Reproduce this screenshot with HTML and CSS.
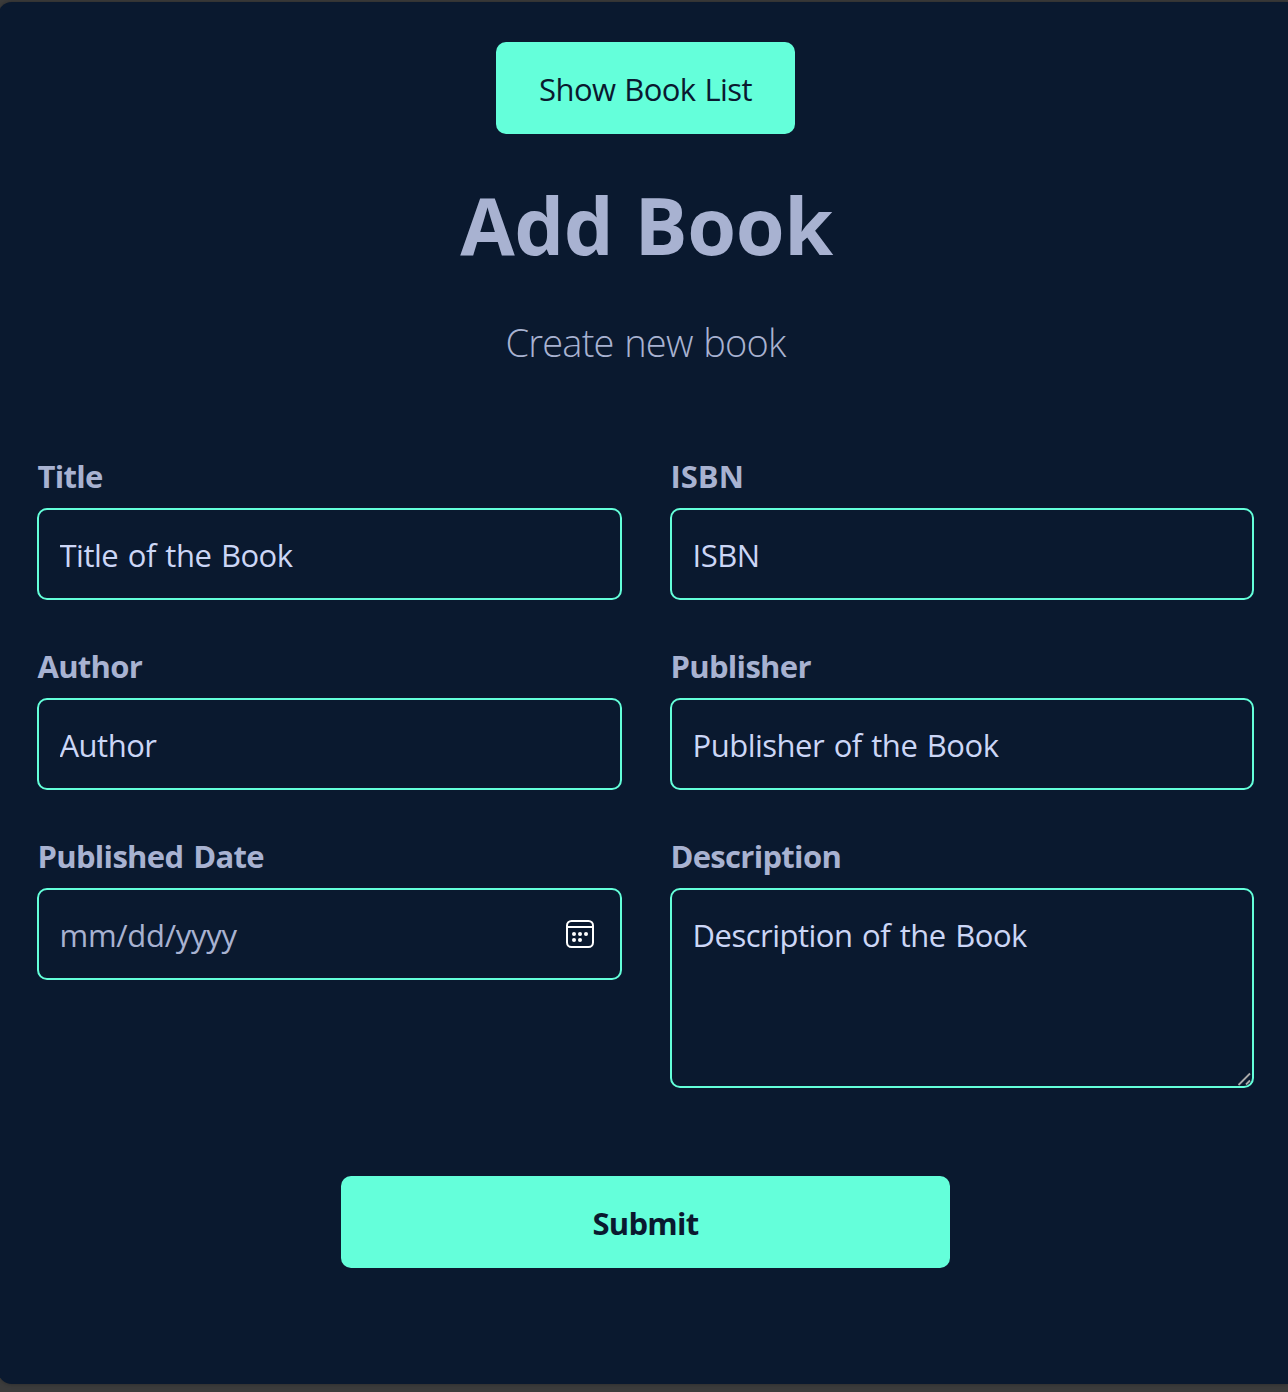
FILE: index.html
```
<!DOCTYPE html>
<html lang="en">
<head>
<meta charset="utf-8">
<title>Add Book</title>
<link rel="stylesheet" href="styles.css">
</head>
<body>
<main class="card">
  <button class="btn btn-list" type="button">Show Book List</button>
  <h1 class="heading">Add Book</h1>
  <p class="lead">Create new book</p>
  <form class="form">
    <div class="fields">
      <div class="field">
        <label class="label" for="title">Title</label>
        <input class="input" id="title" type="text" placeholder="Title of the Book">
      </div>
      <div class="field">
        <label class="label label-short" for="isbn">ISBN</label>
        <input class="input" id="isbn" type="text" placeholder="ISBN">
      </div>
      <div class="field">
        <label class="label" for="author">Author</label>
        <input class="input" id="author" type="text" placeholder="Author">
      </div>
      <div class="field">
        <label class="label" for="publisher">Publisher</label>
        <input class="input" id="publisher" type="text" placeholder="Publisher of the Book">
      </div>
      <div class="field">
        <label class="label" for="date">Published Date</label>
        <div class="input date">
          <input class="date-text" id="date" type="text" placeholder="mm/dd/yyyy">
          <svg class="calendar" width="28" height="28" viewBox="0 0 28 28" fill="none" stroke="#fff" stroke-width="2">
            <rect x="1" y="1" width="26" height="26" rx="4.5"/>
            <path d="M1 7h26"/>
            <g fill="#fff" stroke="none">
              <circle cx="8" cy="14" r="2"/><circle cx="14" cy="14" r="2"/><circle cx="20" cy="14" r="2"/>
              <circle cx="8" cy="20" r="2"/><circle cx="14" cy="20" r="2"/>
            </g>
          </svg>
        </div>
      </div>
      <div class="field">
        <label class="label" for="description">Description</label>
        <div class="area-wrap">
          <textarea class="input area" id="description" placeholder="Description of the Book"></textarea>
          <svg class="grip" width="14" height="14" viewBox="0 0 14 14" stroke="#a9a9a9" stroke-width="1.8">
            <path d="M1.500 13L13 1.500M9 12.500L13 8.500"/>
          </svg>
        </div>
      </div>
    </div>
    <button class="btn btn-submit" type="submit">Submit</button>
  </form>
</main>
</body>
</html>
```
FILE: styles.css
```
* { box-sizing: border-box; }
body {
  margin: 0;
  padding-top: 2px;
  height: 1392px;
  overflow: hidden;
  background: #3c3c3c;
  font-family: "Open Sans", sans-serif;
  font-size: 31px;
  color: #a8b2d1;
}
.card {
  display: flex;
  flex-direction: column;
  align-items: center;
  height: 1382px;
  margin-left: -2px;
  padding: 40px 34px 0 39px;
  background: #0a192f;
  border-radius: 14px 0 0 14px;
  box-shadow: 0 0 4px rgba(0, 0, 0, 0.3);
}
.btn {
  height: 92px;
  padding: 2px 0 0;
  border: 0;
  border-radius: 10px;
  background: #64ffda;
  color: #0a192f;
  font-family: inherit;
  font-size: 31px;
}
.btn-list {
  width: 299px;
  letter-spacing: -0.6px;
  word-spacing: 1.5px;
}
.heading {
  margin: 37px 0 0;
  padding-left: 2px;
  font-size: 79px;
  line-height: 108px;
  font-weight: 700;
  letter-spacing: -0.4px;
  word-spacing: 1px;
}
.lead {
  margin: 36px 0 0;
  font-size: 38px;
  line-height: 54px;
  font-weight: 300;
  letter-spacing: -0.8px;
  word-spacing: 1.5px;
}
.form {
  display: flex;
  flex-direction: column;
  align-items: center;
  width: 100%;
  margin-top: 75px;
}
.fields {
  display: grid;
  grid-template-columns: 585px 584px;
  gap: 34px 48px;
  width: 100%;
}
.label {
  display: block;
  height: 64px;
  padding-left: 0.5px;
  line-height: 64px;
  font-weight: 700;
  letter-spacing: -0.7px;
  word-spacing: 2.5px;
}
.label-short { letter-spacing: 0; }
.input {
  display: block;
  width: 100%;
  height: 92px;
  padding: 2px 20.5px 0;
  border: 2px solid #64ffda;
  border-radius: 10px;
  background: transparent;
  color: #ccd6f6;
  font-family: inherit;
  font-size: 31px;
  letter-spacing: -0.5px;
  word-spacing: 2px;
  outline: 0;
}
.input::placeholder { color: #ccd6f6; opacity: 1; }
.date {
  display: flex;
  align-items: center;
  padding-right: 26px;
}
.date-text {
  flex: 1;
  min-width: 0;
  padding: 0;
  border: 0;
  background: transparent;
  color: #a8b2d1;
  font: inherit;
  letter-spacing: -0.3px;
}
.date-text::placeholder { color: #a8b2d1; opacity: 1; }
.calendar { margin-bottom: 2px; }
.area-wrap { position: relative; height: 200px; }
.area {
  height: 200px;
  padding-top: 24px;
  line-height: 43px;
  resize: none;
}
.grip { position: absolute; right: 3px; bottom: 2px; }
.btn-submit {
  width: 609px;
  margin-top: 88px;
  font-weight: 700;
  letter-spacing: -0.7px;
}
```
